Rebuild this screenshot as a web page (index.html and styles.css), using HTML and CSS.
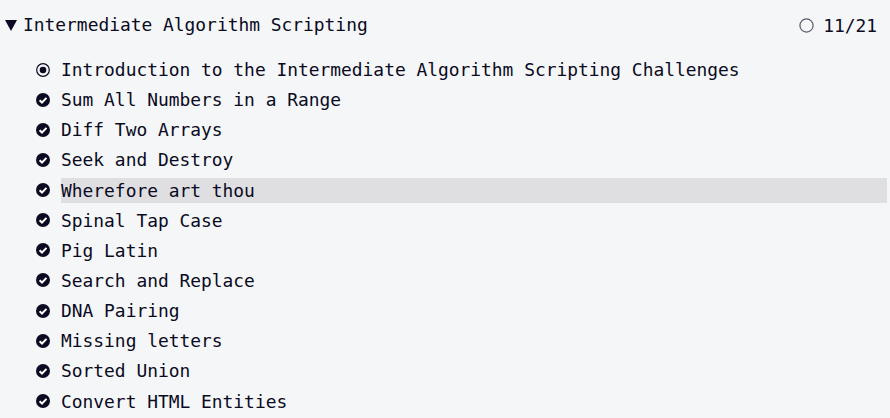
FILE: index.html
```html
<!DOCTYPE html>
<html>
<head>
<meta charset="utf-8">
<link rel="stylesheet" href="styles.css">
</head>
<body>
<div class="block">
  <div class="header">
    <svg class="caret" width="12" height="11" viewBox="0 0 12 11"><path d="M0 0 H12 L6 11 Z" fill="#0a0a23"/></svg>
    <span class="title">Intermediate Algorithm Scripting</span>
    <span class="progress">
      <svg class="ring" width="15" height="15" viewBox="0 0 15 15"><circle cx="7.5" cy="7.5" r="6.6" fill="none" stroke="#5a5a6e" stroke-width="1.2"/></svg>
      <span>11/21</span>
    </span>
  </div>
  <ul class="list">
    <li class="row"><svg class="icon" viewBox="0 0 14 14"><circle cx="7" cy="7" r="6.3" fill="none" stroke="#0a0a23" stroke-width="1.2"/><circle cx="7" cy="7" r="3.3" fill="#0a0a23"/></svg><span class="label">Introduction to the Intermediate Algorithm Scripting Challenges</span></li>
    <li class="row"><svg class="icon" viewBox="0 0 14 14"><circle cx="7" cy="7" r="7" fill="#0a0a23"/><path d="M3.6 7.2 L6 9.5 L10.5 4.9" fill="none" stroke="#fff" stroke-width="2"/></svg><span class="label">Sum All Numbers in a Range</span></li>
    <li class="row"><svg class="icon" viewBox="0 0 14 14"><circle cx="7" cy="7" r="7" fill="#0a0a23"/><path d="M3.6 7.2 L6 9.5 L10.5 4.9" fill="none" stroke="#fff" stroke-width="2"/></svg><span class="label">Diff Two Arrays</span></li>
    <li class="row"><svg class="icon" viewBox="0 0 14 14"><circle cx="7" cy="7" r="7" fill="#0a0a23"/><path d="M3.6 7.2 L6 9.5 L10.5 4.9" fill="none" stroke="#fff" stroke-width="2"/></svg><span class="label">Seek and Destroy</span></li>
    <li class="row"><svg class="icon" viewBox="0 0 14 14"><circle cx="7" cy="7" r="7" fill="#0a0a23"/><path d="M3.6 7.2 L6 9.5 L10.5 4.9" fill="none" stroke="#fff" stroke-width="2"/></svg><span class="label active">Wherefore art thou</span></li>
    <li class="row"><svg class="icon" viewBox="0 0 14 14"><circle cx="7" cy="7" r="7" fill="#0a0a23"/><path d="M3.6 7.2 L6 9.5 L10.5 4.9" fill="none" stroke="#fff" stroke-width="2"/></svg><span class="label">Spinal Tap Case</span></li>
    <li class="row"><svg class="icon" viewBox="0 0 14 14"><circle cx="7" cy="7" r="7" fill="#0a0a23"/><path d="M3.6 7.2 L6 9.5 L10.5 4.9" fill="none" stroke="#fff" stroke-width="2"/></svg><span class="label">Pig Latin</span></li>
    <li class="row"><svg class="icon" viewBox="0 0 14 14"><circle cx="7" cy="7" r="7" fill="#0a0a23"/><path d="M3.6 7.2 L6 9.5 L10.5 4.9" fill="none" stroke="#fff" stroke-width="2"/></svg><span class="label">Search and Replace</span></li>
    <li class="row"><svg class="icon" viewBox="0 0 14 14"><circle cx="7" cy="7" r="7" fill="#0a0a23"/><path d="M3.6 7.2 L6 9.5 L10.5 4.9" fill="none" stroke="#fff" stroke-width="2"/></svg><span class="label">DNA Pairing</span></li>
    <li class="row"><svg class="icon" viewBox="0 0 14 14"><circle cx="7" cy="7" r="7" fill="#0a0a23"/><path d="M3.6 7.2 L6 9.5 L10.5 4.9" fill="none" stroke="#fff" stroke-width="2"/></svg><span class="label">Missing letters</span></li>
    <li class="row"><svg class="icon" viewBox="0 0 14 14"><circle cx="7" cy="7" r="7" fill="#0a0a23"/><path d="M3.6 7.2 L6 9.5 L10.5 4.9" fill="none" stroke="#fff" stroke-width="2"/></svg><span class="label">Sorted Union</span></li>
    <li class="row"><svg class="icon" viewBox="0 0 14 14"><circle cx="7" cy="7" r="7" fill="#0a0a23"/><path d="M3.6 7.2 L6 9.5 L10.5 4.9" fill="none" stroke="#fff" stroke-width="2"/></svg><span class="label">Convert HTML Entities</span></li>
  </ul>
</div>
</body>
</html>
```
FILE: styles.css
```css
html, body {
  margin: 0;
  padding: 0;
  background: #f5f6f7;
}
body {
  font-family: "DejaVu Sans Mono", "Liberation Mono", monospace;
  font-size: 17.9px;
  color: #0a0a23;
  overflow: hidden;
}
.block {
  width: 890px;
}
.header {
  display: flex;
  align-items: center;
  height: 26px;
  padding: 12px 13px 0 5px;
}
.caret {
  display: block;
  flex: none;
  margin-right: 6px;
}
.title {
  flex: 1;
  line-height: 26px;
}
.progress {
  display: flex;
  align-items: center;
  gap: 9px;
}
.ring {
  display: block;
}
.list {
  list-style: none;
  margin: 19px 0 0 0;
  padding: 0 3px 0 36px;
}
.row {
  display: flex;
  align-items: center;
  gap: 11px;
  height: 25px;
  margin-bottom: 5.15px;
}
.icon {
  width: 14px;
  height: 14px;
  flex: none;
}
.label {
  flex: 1;
  line-height: 25px;
  white-space: nowrap;
}
.label.active {
  background: #dfdfe2;
}
```
